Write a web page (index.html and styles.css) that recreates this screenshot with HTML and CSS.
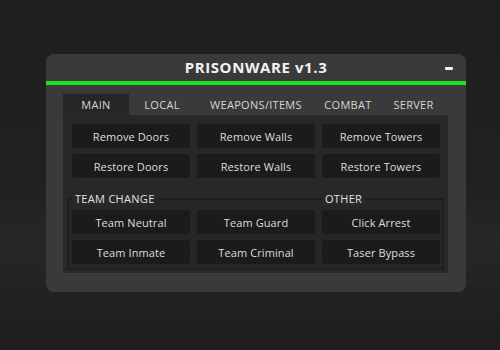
FILE: index.html
```html
<!DOCTYPE html>
<html lang="en">
<head>
    <meta charset="UTF-8">
    <meta name="viewport" content="width=device-width, initial-scale=1.0">
    <title>PRISONWARE v1.3</title>
    <link rel="stylesheet" href="styles.css">
</head>
<body>
    <div class="window">
        <div class="title-bar">
            <span></span>
            <div class="title">PRISONWARE v1.3</div>
            <div class="minimize"><span></span></div>
        </div>
        <div class="accent"></div>

        <div class="window-body">
            <div class="tabs">
                <div class="tab active">MAIN</div>
                <div class="tab">LOCAL</div>
                <div class="tab">WEAPONS/ITEMS</div>
                <div class="tab">COMBAT</div>
                <div class="tab">SERVER</div>
            </div>

            <div class="panel">
                <div class="button-grid">
                    <button class="btn">Remove Doors</button>
                    <button class="btn">Remove Walls</button>
                    <button class="btn">Remove Towers</button>
                    <button class="btn">Restore Doors</button>
                    <button class="btn">Restore Walls</button>
                    <button class="btn">Restore Towers</button>
                </div>

                <div class="group">
                    <div class="group-head">
                        <span class="legend">TEAM CHANGE</span>
                        <span></span>
                        <span class="legend">OTHER</span>
                    </div>
                    <div class="button-grid">
                        <button class="btn">Team Neutral</button>
                        <button class="btn">Team Guard</button>
                        <button class="btn">Click Arrest</button>
                        <button class="btn">Team Inmate</button>
                        <button class="btn">Team Criminal</button>
                        <button class="btn">Taser Bypass</button>
                    </div>
                </div>
            </div>
        </div>
    </div>
</body>
</html>
```

FILE: styles.css
```css
* {
    margin: 0;
    padding: 0;
    box-sizing: border-box;
}

body {
    font-family: 'Open Sans', 'Liberation Sans', sans-serif;
    background: linear-gradient(to bottom, #1e1e1e 0%, #212121 55%, #272727 68%, #1d1d1d 100%);
    width: 500px;
    height: 350px;
    padding: 54px 0 0 46px;
    overflow: hidden;
}

.window {
    width: 420px;
    background: #3a3a3a;
    border-radius: 8px;
    padding-bottom: 19px;
}

.title-bar {
    display: grid;
    grid-template-columns: 1fr auto 1fr;
    align-items: center;
    height: 27px;
}

.title {
    color: #f2f2f2;
    font-size: 15px;
    font-weight: 700;
    line-height: 27px;
    letter-spacing: 0.6px;
}

.minimize {
    display: flex;
    justify-content: flex-end;
    padding-right: 13px;
}

.minimize span {
    width: 8px;
    height: 3px;
    background: #f2f2f2;
    border-radius: 1px;
    margin-top: 1px;
}

.accent {
    height: 4px;
    background: #1fe01f;
}

.window-body {
    padding: 9px 18px 0 17px;
}

.tabs {
    display: grid;
    grid-template-columns: 66px 66px 122px 62px 1fr;
    height: 21px;
}

.tab {
    color: #d6d6d6;
    font-size: 11px;
    font-weight: 500;
    letter-spacing: 0.3px;
    line-height: 21px;
    text-align: center;
}

.tab.active {
    background: #262626;
}

.panel {
    background: #282828;
    padding: 9px 8px 3px 9px;
}

.button-grid {
    display: grid;
    grid-template-columns: repeat(3, 118px);
    gap: 6px 7px;
}

.btn {
    height: 24px;
    border: none;
    border-radius: 2px;
    background: #1b1b1b;
    color: #dedede;
    font-family: 'Open Sans', 'Liberation Sans', sans-serif;
    font-size: 11px;
    font-weight: 500;
    letter-spacing: 0.1px;
}

.group {
    margin: 20px -4px 0 -5px;
    border: 2px solid #1f1f1f;
    background: #262626;
    padding: 0 2px 4px 3px;
}

.group-head {
    display: grid;
    grid-template-columns: repeat(3, 118px);
    column-gap: 7px;
    height: 14px;
    margin-top: -8px;
    margin-bottom: 4px;
}

.legend {
    justify-self: start;
    background: #282828;
    color: #e2e2e2;
    font-size: 11px;
    font-weight: 500;
    letter-spacing: 0.3px;
    line-height: 14px;
    padding: 0 3px;
}
```
